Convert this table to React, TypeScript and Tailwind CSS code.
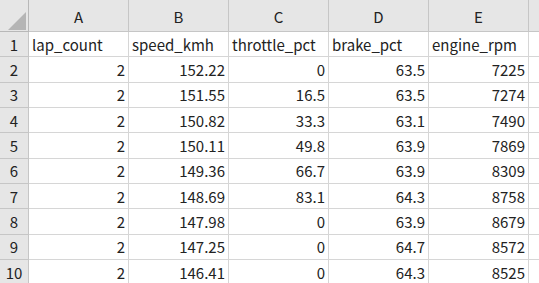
const cols = ['A', 'B', 'C', 'D', 'E'];

const rows: (string | number)[][] = [
  ['lap_count', 'speed_kmh', 'throttle_pct', 'brake_pct', 'engine_rpm'],
  [2, 152.22, 0, 63.5, 7225],
  [2, 151.55, 16.5, 63.5, 7274],
  [2, 150.82, 33.3, 63.1, 7490],
  [2, 150.11, 49.8, 63.9, 7869],
  [2, 149.36, 66.7, 63.9, 8309],
  [2, 148.69, 83.1, 64.3, 8758],
  [2, 147.98, 0, 63.9, 8679],
  [2, 147.25, 0, 64.7, 8572],
  [2, 146.41, 0, 64.3, 8525],
];

const font = { fontFamily: '"Noto Sans CJK JP", "Noto Sans", sans-serif' };

export default function App() {
  return (
    <div className="w-[539px] h-[283px] overflow-hidden bg-white text-[15px] text-[#222]" style={font}>
      {/* column headers */}
      <div className="flex h-[32px] bg-[#e6e6e6]">
        <div className="relative w-[29px] shrink-0 border-r border-b border-[#b8b8b8]">
          <div className="absolute left-[8px] top-[12px] w-[18px] h-[18px] bg-[#b5b5b5] [clip-path:polygon(100%_0,100%_100%,0_100%)]" />
        </div>
        {cols.map((c) => (
          <div
            key={c}
            className="w-[100px] shrink-0 flex items-center justify-center border-r border-b border-[#c6c6c6] leading-none pt-[2px]"
          >
            {c}
          </div>
        ))}
        <div className="flex-1 border-b border-[#c6c6c6]" />
      </div>

      {rows.map((r, i) => (
        <div key={i} className="flex h-[25.33px]">
          <div className="w-[29px] shrink-0 bg-[#e6e6e6] border-r border-b border-[#c6c6c6] flex items-center justify-center leading-none">
            {i + 1}
          </div>
          {r.map((v, j) => (
            <div
              key={j}
              className={`w-[100px] shrink-0 border-r border-b border-[#d6d6d6] flex items-center px-[3px] leading-none whitespace-nowrap ${
                typeof v === 'number' ? 'justify-end' : 'justify-start'
              }`}
            >
              {v}
            </div>
          ))}
          <div className="flex-1 border-b border-[#d6d6d6]" />
        </div>
      ))}
    </div>
  );
}
